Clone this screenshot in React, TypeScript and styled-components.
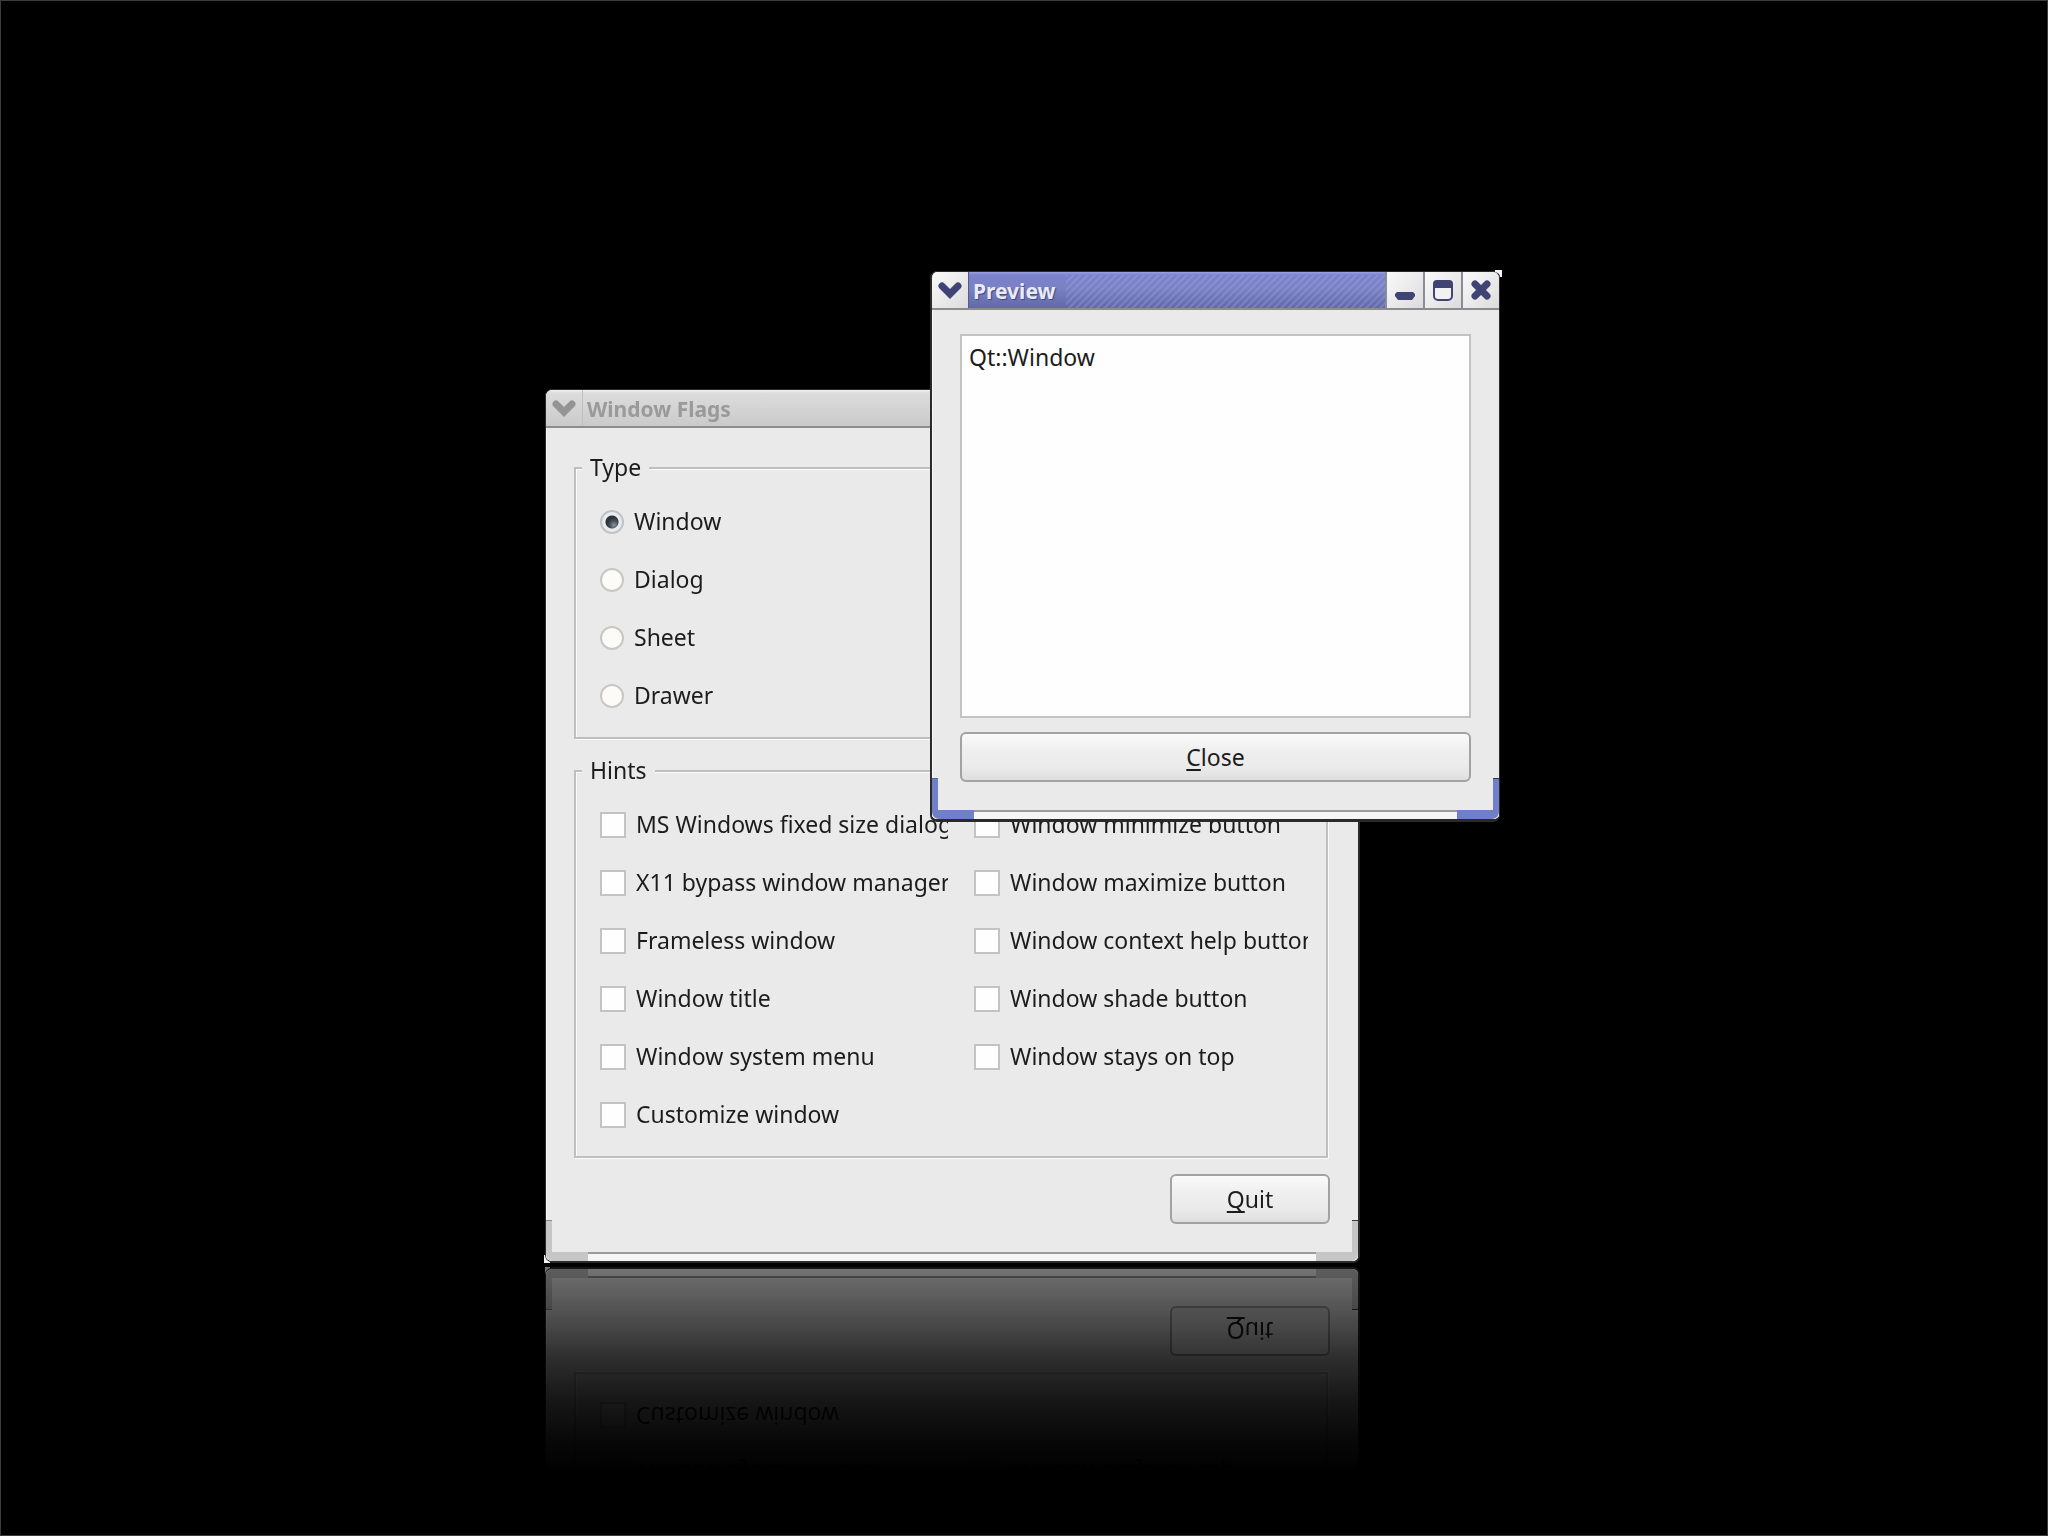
import React, { useId } from "react";
import styled, { createGlobalStyle, css } from "styled-components";

const font = `"Noto Sans", "Open Sans", "DejaVu Sans", sans-serif`;

const GlobalStyle = createGlobalStyle`
  *, *::before, *::after { box-sizing: border-box; }
  body { margin: 0; background: #010001; }
  body, button, input, textarea { font-family: ${font}; font-size: 23px; color: #1c1c1c; }
`;

const Desktop = styled.main`
  position: relative;
  min-height: 100vh;
  overflow: hidden;
  background: #010001;
  border: 1px solid #3c3c3c;
`;

/* Windows float freely over the desktop. */
const WindowBox = styled.section<{ $left: number; $top: number; $width: number; $reflect?: boolean }>`
  position: absolute;
  left: ${(p) => p.$left}px;
  top: ${(p) => p.$top}px;
  width: ${(p) => p.$width}px;
  ${(p) =>
    p.$reflect &&
    css`
      -webkit-box-reflect: below 4px
        linear-gradient(
          to top,
          rgba(0, 0, 0, 0.47) 0,
          rgba(0, 0, 0, 0.43) 18px,
          rgba(0, 0, 0, 0.3) 60px,
          rgba(0, 0, 0, 0.2) 90px,
          rgba(0, 0, 0, 0.1) 130px,
          rgba(0, 0, 0, 0.03) 175px,
          rgba(0, 0, 0, 0) 205px
        );
    `}
`;

const Frame = styled.div<{ $active?: boolean }>`
  position: relative;
  overflow: hidden;
  background: #ebeaea;
  border-style: solid;
  border-color: #2a2a2a;
  border-width: ${(p) => (p.$active ? "1px 1px 3px 2px" : "1px 2px 2px 1px")};
  border-radius: 7px;
`;

const TitleBar = styled.header<{ $active?: boolean }>`
  display: flex;
  height: 38px;
  border-bottom: 2px solid #8c8c8c;
  background: ${(p) =>
    p.$active
      ? "linear-gradient(#9aa2e4 0, #7c82cb 3px, #7a81c4 45%, #6269a8)"
      : "linear-gradient(#f2f2f2 0, #dcdcdc 3px, #d2d2d2 60%, #cacaca)"};
`;

const TitleButton = styled.button<{ $active?: boolean; $menu?: boolean }>`
  display: flex;
  align-items: center;
  justify-content: center;
  flex: none;
  width: ${(p) => (p.$menu ? 37 : 38)}px;
  padding: 0;
  border: 0 solid ${(p) => (p.$active ? (p.$menu ? "#565b84" : "#8b8c96") : "#c0c0c0")};
  border-width: ${(p) => (p.$menu ? "0 1px 0 0" : "0 0 0 2px")};
  background: ${(p) => (p.$active ? "linear-gradient(135deg, #fafafa, #dcdcde)" : "transparent")};
  color: ${(p) => (p.$active ? "#3f4475" : "#949494")};
`;

const Title = styled.h1<{ $active?: boolean }>`
  margin: 0;
  padding: 1px 10px 0 4px;
  font-size: 21px;
  font-weight: 700;
  line-height: 36px;
  white-space: nowrap;
  color: ${(p) => (p.$active ? "#e9ebf8" : "#9a9a9a")};
  text-shadow: ${(p) => (p.$active ? "1px 1px 1px #3f4685" : "none")};
`;

const Stripes = styled.div`
  flex: 1;
  margin-top: 3px;
  background: repeating-linear-gradient(
    135deg,
    rgba(170, 180, 240, 0.28) 0 1px,
    transparent 2px 4px,
    rgba(170, 180, 240, 0.28) 5px
  );
`;

const WindowBody = styled.div<{ $gap: number }>`
  display: flex;
  flex-direction: column;
  gap: ${(p) => p.$gap}px;
  padding: 24px 28px 28px;
  box-shadow: inset 1px 0 0 #f8f8f8;
`;

const FooterEdge = styled.div`
  height: 9px;
  border-top: 2px solid #9c9a9a;
  background: #f6f6f6;
`;

const Grip = styled.div<{ $side: "left" | "right"; $color: string; $edge: string }>`
  position: absolute;
  bottom: 0;
  ${(p) => p.$side}: 0;
  width: 42px;
  height: 41px;
  border-bottom: 9px solid ${(p) => p.$color};
  border-${(p) => p.$side}: 6px solid ${(p) => p.$color};
  border-bottom-${(p) => p.$side}-radius: 7px;

  &::before {
    content: "";
    position: absolute;
    top: 0;
    ${(p) => p.$side}: -6px;
    width: 6px;
    height: 1px;
    background: ${(p) => p.$edge};
  }
`;

const Notch = styled.svg<{ $corner: "topRight" | "bottomLeft" }>`
  position: absolute;
  width: 9px;
  height: 9px;
  ${(p) => (p.$corner === "topRight" ? "top: -1px; right: -2px;" : "bottom: 0; left: -1px;")}
`;

const Group = styled.fieldset`
  min-width: 0;
  margin: 0 2px 0 0;
  padding: 22px 18px 25px 24px;
  border: 2px solid #c0bfbf;
  box-shadow: 1px 1px 0 #fcfcfc, inset 1px 1px 0 #fcfcfc;
`;

const Legend = styled.legend`
  margin-left: -18px;
  padding: 0 8px 2px;
  line-height: 30px;
  background: #ebeaea;
`;

const Options = styled.div`
  display: grid;
  grid-template-columns: 174fr 167fr;
  gap: 26px;
`;

const Column = styled.div`
  display: flex;
  flex-direction: column;
  gap: 26px;
  min-width: 0;
`;

const Option = styled.div`
  display: flex;
  align-items: center;
  height: 32px;
  gap: 10px;
  min-width: 0;
`;

const OptionLabel = styled.label`
  min-width: 0;
  overflow: hidden;
  white-space: nowrap;
  padding-bottom: 2px;
  line-height: 32px;
`;

const Radio = styled.input`
  appearance: none;
  flex: none;
  width: 24px;
  height: 24px;
  margin: 0;
  border: 2px solid #c9c7c1;
  border-radius: 50%;
  background: #fcfbf8;

  &:checked {
    border-color: #bfc3c6;
    background: radial-gradient(circle at 50% 50%, transparent 6px, #e9ecef 7px),
      radial-gradient(circle at 60% 65%, #8b959d 0, #4a545c 4px, #2d353c 7px);
  }
`;

const CheckBox = styled.input`
  appearance: none;
  flex: none;
  width: 26px;
  height: 26px;
  margin: 0;
  border: 2px solid #c4c2c2;
  background: #fefefe;
`;

const PushButton = styled.button<{ $end?: boolean }>`
  align-self: ${(p) => (p.$end ? "flex-end" : "stretch")};
  min-width: 160px;
  height: 50px;
  padding: 0;
  border: 2px solid #a3a1a1;
  border-radius: 6px;
  background: linear-gradient(#fafafa, #f0eff0 35%, #ecebec 70%, #e0dfdf);

  u {
    text-decoration-thickness: 2px;
    text-underline-offset: 3px;
    text-decoration-skip-ink: none;
  }
`;

const TextView = styled.textarea`
  display: block;
  width: 100%;
  height: 384px;
  padding: 7px;
  border: 2px solid #c4c3c3;
  outline: none;
  resize: none;
  line-height: 28px;
  background: #fefefe;
`;

const MenuIcon = () => (
  <svg width="28" height="28" viewBox="0 0 28 28" fill="none" stroke="currentColor" strokeWidth="7" strokeLinecap="round" aria-hidden="true">
    <path d="M6 10 L14 18 L22 10" />
  </svg>
);

const MinimizeIcon = () => (
  <svg width="28" height="28" viewBox="0 0 28 28" aria-hidden="true">
    <path d="M6 16 H22 L24 18 V20 L21 24 H7 L4 20 V18 Z" fill="currentColor" />
  </svg>
);

const MaximizeIcon = () => (
  <svg width="28" height="28" viewBox="0 0 28 28" aria-hidden="true">
    <rect x="5" y="5" width="18" height="19" rx="4" fill="#f1f1f2" stroke="currentColor" strokeWidth="2" />
    <path d="M4 12 V8 Q4 4 8 4 H20 Q24 4 24 8 V12 Z" fill="currentColor" />
  </svg>
);

const CloseIcon = () => (
  <svg width="28" height="28" viewBox="0 0 28 28" fill="none" stroke="currentColor" strokeWidth="7" strokeLinecap="round" aria-hidden="true">
    <path d="M8 8 L20 20 M20 8 L8 20" />
  </svg>
);

const CornerNotch = ({ corner }: { corner: "topRight" | "bottomLeft" }) => (
  <Notch $corner={corner} viewBox="0 0 9 9" aria-hidden="true">
    {corner === "topRight" ? (
      <path d="M2 0 H9 V7 L7 7 Q7 3 2 2 Z" fill="#f4f4f4" />
    ) : (
      <path d="M0 1 H1 Q1 6 6 8 V9 H0 Z" fill="#f4f4f4" />
    )}
  </Notch>
);

const types = ["Window", "Dialog", "Sheet", "Drawer"];

const hints = [
  [
    "MS Windows fixed size dialog",
    "X11 bypass window manager",
    "Frameless window",
    "Window title",
    "Window system menu",
    "Customize window",
  ],
  [
    "Window minimize button",
    "Window maximize button",
    "Window context help button",
    "Window shade button",
    "Window stays on top",
  ],
];

function RadioOption({ text, checked }: { text: string; checked: boolean }) {
  const id = useId();
  return (
    <Option>
      <Radio type="radio" name="type" id={id} defaultChecked={checked} />
      <OptionLabel htmlFor={id}>{text}</OptionLabel>
    </Option>
  );
}

function CheckOption({ text }: { text: string }) {
  const id = useId();
  return (
    <Option>
      <CheckBox type="checkbox" id={id} />
      <OptionLabel htmlFor={id}>{text}</OptionLabel>
    </Option>
  );
}

function ControllerWindow() {
  return (
    <WindowBox $left={544} $top={388} $width={815} $reflect>
      <Frame>
        <TitleBar>
          <TitleButton type="button" $menu aria-label="Window menu">
            <MenuIcon />
          </TitleButton>
          <Title>Window Flags</Title>
        </TitleBar>
        <WindowBody $gap={16}>
          <Group>
            <Legend>Type</Legend>
            <Column>
              {types.map((t) => (
                <RadioOption key={t} text={t} checked={t === "Window"} />
              ))}
            </Column>
          </Group>
          <Group>
            <Legend>Hints</Legend>
            <Options>
              {hints.map((column) => (
                <Column key={column[0]}>
                  {column.map((h) => (
                    <CheckOption key={h} text={h} />
                  ))}
                </Column>
              ))}
            </Options>
          </Group>
          <PushButton type="button" $end>
            <u>Q</u>uit
          </PushButton>
        </WindowBody>
        <FooterEdge />
        <Grip $side="left" $color="#c6c6c6" $edge="#8a8a8a" />
        <Grip $side="right" $color="#c6c6c6" $edge="#3a3a3a" />
      </Frame>
      <CornerNotch corner="bottomLeft" />
    </WindowBox>
  );
}

function PreviewWindow() {
  return (
    <WindowBox $left={929} $top={270} $width={570}>
      <Frame $active>
        <TitleBar $active>
          <TitleButton type="button" $active $menu aria-label="Window menu">
            <MenuIcon />
          </TitleButton>
          <Title $active>Preview</Title>
          <Stripes />
          <TitleButton type="button" $active aria-label="Minimize">
            <MinimizeIcon />
          </TitleButton>
          <TitleButton type="button" $active aria-label="Maximize">
            <MaximizeIcon />
          </TitleButton>
          <TitleButton type="button" $active aria-label="Close window">
            <CloseIcon />
          </TitleButton>
        </TitleBar>
        <WindowBody $gap={14}>
          <TextView aria-label="Window flags" readOnly defaultValue="Qt::Window" />
          <PushButton type="button">
            <u>C</u>lose
          </PushButton>
        </WindowBody>
        <FooterEdge />
        <Grip $side="left" $color="#6f80c9" $edge="#5664a8" />
        <Grip $side="right" $color="#6f80c9" $edge="#2a2f55" />
      </Frame>
      <CornerNotch corner="topRight" />
    </WindowBox>
  );
}

export default function App() {
  return (
    <Desktop>
      <GlobalStyle />
      <ControllerWindow />
      <PreviewWindow />
    </Desktop>
  );
}
